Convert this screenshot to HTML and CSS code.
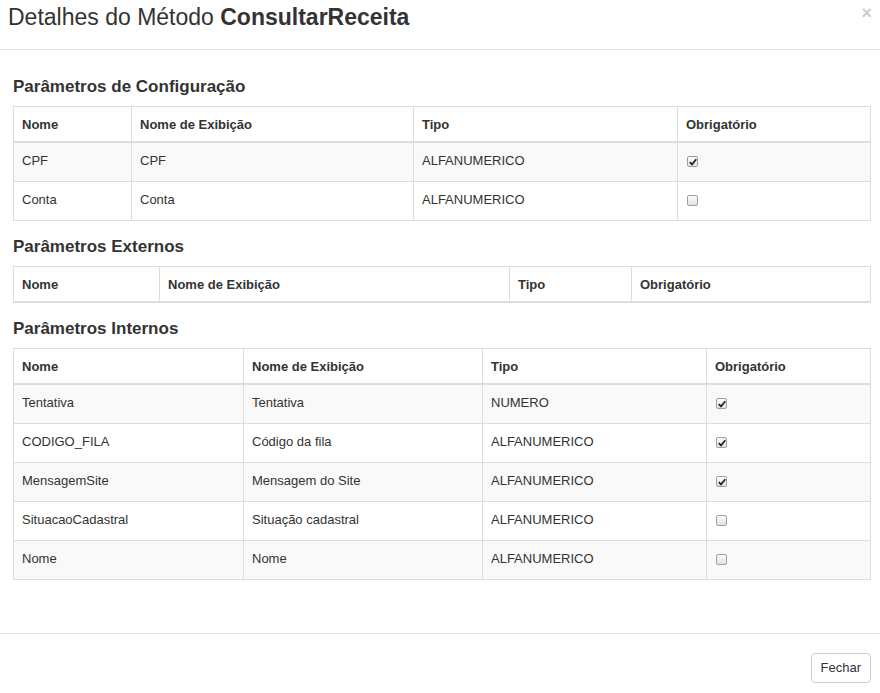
FILE: index.html
```html
<!DOCTYPE html>
<html lang="pt-BR">
<head>
<meta charset="utf-8">
<title>Detalhes do Método</title>
<link rel="stylesheet" href="styles.css">
</head>
<body>
<div class="modal">
  <div class="modal-header">
    <h4 class="modal-title">Detalhes do Método <b>ConsultarReceita</b></h4>
    <span class="close">&times;</span>
  </div>
  <div class="modal-body">
    <h5 class="section-title first">Parâmetros de Configuração</h5>
    <table class="grid">
      <colgroup><col style="width:118px"><col style="width:282px"><col style="width:264px"><col></colgroup>
      <thead><tr><th>Nome</th><th>Nome de Exibição</th><th>Tipo</th><th>Obrigatório</th></tr></thead>
      <tbody>
        <tr><td>CPF</td><td>CPF</td><td>ALFANUMERICO</td><td><span class="chk on"><svg viewBox="0 0 8 8" width="8" height="8"><path d="M0.8 4.2 L3 6.4 L7.3 1.2" fill="none" stroke="#222" stroke-width="1.7"/></svg></span></td></tr>
        <tr><td>Conta</td><td>Conta</td><td>ALFANUMERICO</td><td><span class="chk"></span></td></tr>
      </tbody>
    </table>

    <h5 class="section-title">Parâmetros Externos</h5>
    <table class="grid">
      <colgroup><col style="width:146px"><col style="width:350px"><col style="width:122px"><col></colgroup>
      <thead><tr><th>Nome</th><th>Nome de Exibição</th><th>Tipo</th><th>Obrigatório</th></tr></thead>
    </table>

    <h5 class="section-title">Parâmetros Internos</h5>
    <table class="grid">
      <colgroup><col style="width:230px"><col style="width:239px"><col style="width:224px"><col></colgroup>
      <thead><tr><th>Nome</th><th>Nome de Exibição</th><th>Tipo</th><th>Obrigatório</th></tr></thead>
      <tbody>
        <tr><td>Tentativa</td><td>Tentativa</td><td>NUMERO</td><td><span class="chk on"><svg viewBox="0 0 8 8" width="8" height="8"><path d="M0.8 4.2 L3 6.4 L7.3 1.2" fill="none" stroke="#222" stroke-width="1.7"/></svg></span></td></tr>
        <tr><td>CODIGO_FILA</td><td>Código da fila</td><td>ALFANUMERICO</td><td><span class="chk on"><svg viewBox="0 0 8 8" width="8" height="8"><path d="M0.8 4.2 L3 6.4 L7.3 1.2" fill="none" stroke="#222" stroke-width="1.7"/></svg></span></td></tr>
        <tr><td>MensagemSite</td><td>Mensagem do Site</td><td>ALFANUMERICO</td><td><span class="chk on"><svg viewBox="0 0 8 8" width="8" height="8"><path d="M0.8 4.2 L3 6.4 L7.3 1.2" fill="none" stroke="#222" stroke-width="1.7"/></svg></span></td></tr>
        <tr><td>SituacaoCadastral</td><td>Situação cadastral</td><td>ALFANUMERICO</td><td><span class="chk"></span></td></tr>
        <tr><td>Nome</td><td>Nome</td><td>ALFANUMERICO</td><td><span class="chk"></span></td></tr>
      </tbody>
    </table>
  </div>
  <div class="modal-footer">
    <button class="btn" type="button">Fechar</button>
  </div>
</div>
</body>
</html>
```
FILE: styles.css
```css
html, body {
  margin: 0;
  padding: 0;
  background: #fff;
}
body {
  font-family: "Liberation Sans", Arial, sans-serif;
  font-size: 13px;
  color: #333;
}
.modal {
  width: 880px;
  height: 693px;
  display: flex;
  flex-direction: column;
}
.modal-header {
  height: 50px;
  box-sizing: border-box;
  border-bottom: 1px solid #e5e5e5;
  display: flex;
  justify-content: space-between;
  align-items: flex-start;
  padding: 4px 8px 0 8px;
}
.modal-title {
  margin: 0;
  font-size: 23px;
  line-height: 27px;
  font-weight: normal;
  color: #333;
}
.modal-title b {
  font-weight: bold;
}
.close {
  font-size: 18px;
  font-weight: bold;
  line-height: 16px;
  color: #000;
  opacity: 0.2;
  margin-top: 1px;
}
.modal-body {
  flex: 1;
  padding: 0 9px 0 13px;
}
.section-title {
  margin: 16px 0 9px;
  font-size: 17px;
  line-height: 20px;
  font-weight: bold;
  color: #333;
}
.section-title.first {
  margin-top: 27px;
}
.grid {
  width: 858px;
  border-collapse: collapse;
  table-layout: fixed;
  border: 1px solid #ddd;
}
.grid th, .grid td {
  border: 1px solid #ddd;
  text-align: left;
  vertical-align: top;
  padding: 8px 8px;
}
.grid th {
  font-weight: bold;
  line-height: 17px;
  padding-top: 9px;
  border-bottom: 2px solid #ddd;
}
.grid td {
  line-height: 20px;
  padding-bottom: 10px;
}
.grid tbody tr:nth-child(odd) td {
  background: #f9f9f9;
}
.chk {
  display: inline-block;
  width: 11px;
  height: 11px;
  box-sizing: border-box;
  border: 1px solid #a0a0a0;
  border-radius: 2px;
  background: linear-gradient(#fbfbfb, #e2e2e2);
  vertical-align: middle;
  position: relative;
  top: 0;
  margin-left: 1px;
}
.chk svg {
  display: block;
  margin: 1px 0 0 1px;
}
.modal-footer {
  height: 60px;
  box-sizing: border-box;
  border-top: 1px solid #e5e5e5;
  display: flex;
  justify-content: flex-end;
  align-items: flex-start;
  padding: 19px 9px 0 0;
}
.btn {
  font-family: "Liberation Sans", Arial, sans-serif;
  font-size: 13px;
  color: #333;
  background: #fff;
  border: 1px solid #ccc;
  border-radius: 4px;
  height: 30px;
  padding: 0 9px;
  line-height: 28px;
}
```
